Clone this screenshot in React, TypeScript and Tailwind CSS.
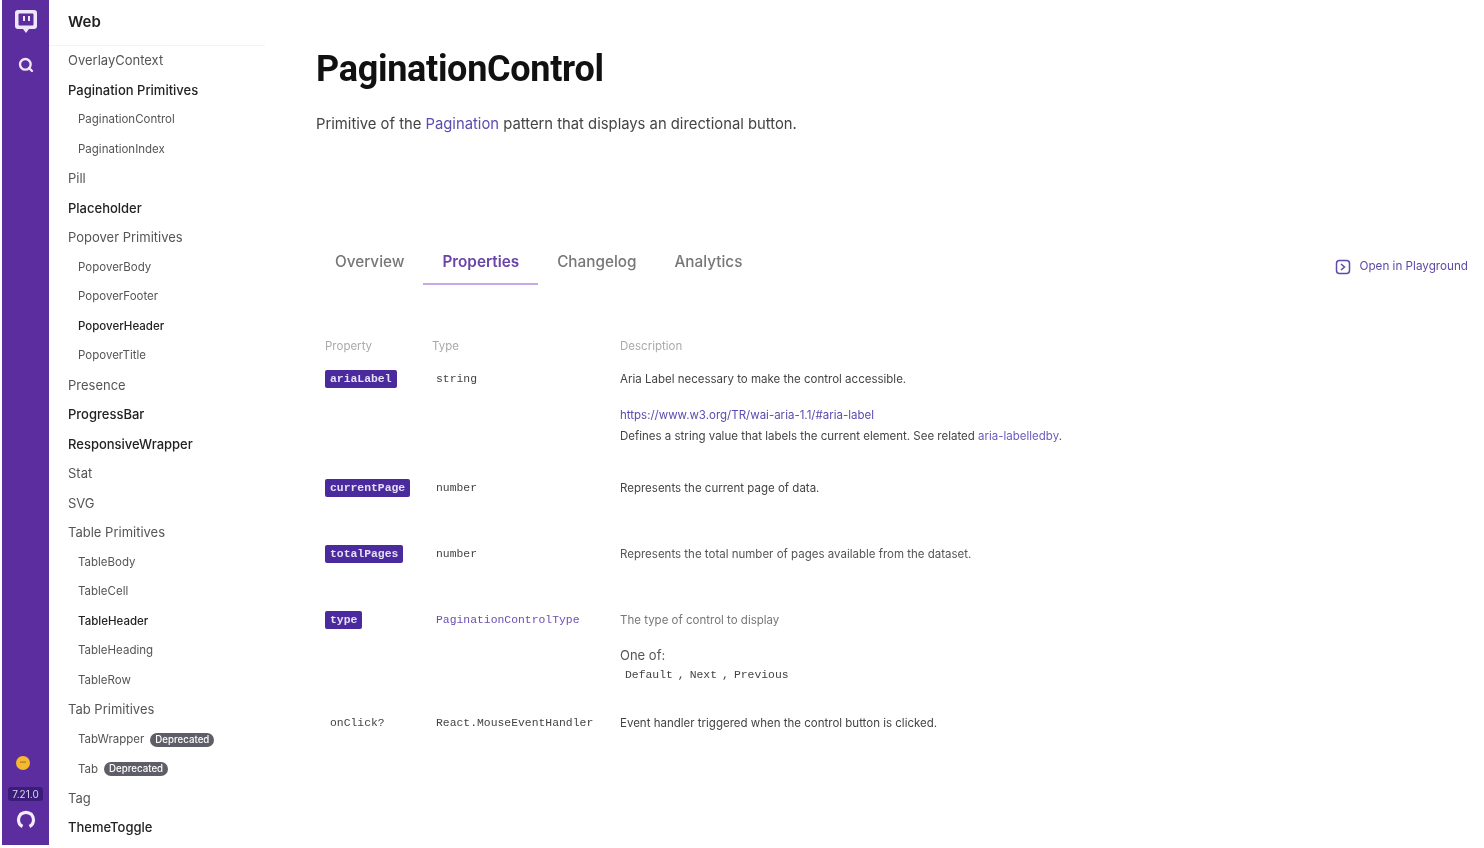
// Component docs page: purple rail, nav list, and the properties table.
import { Search } from "lucide-react";

type NavItem = { label: string; sub?: boolean; dark?: boolean; badge?: boolean };

const nav: NavItem[] = [
  { label: "OverlayContext" },
  { label: "Pagination Primitives", dark: true },
  { label: "PaginationControl", sub: true },
  { label: "PaginationIndex", sub: true },
  { label: "Pill" },
  { label: "Placeholder", dark: true },
  { label: "Popover Primitives" },
  { label: "PopoverBody", sub: true },
  { label: "PopoverFooter", sub: true },
  { label: "PopoverHeader", sub: true, dark: true },
  { label: "PopoverTitle", sub: true },
  { label: "Presence" },
  { label: "ProgressBar", dark: true },
  { label: "ResponsiveWrapper", dark: true },
  { label: "Stat" },
  { label: "SVG" },
  { label: "Table Primitives" },
  { label: "TableBody", sub: true },
  { label: "TableCell", sub: true },
  { label: "TableHeader", sub: true, dark: true },
  { label: "TableHeading", sub: true },
  { label: "TableRow", sub: true },
  { label: "Tab Primitives" },
  { label: "TabWrapper", sub: true, badge: true },
  { label: "Tab", sub: true, badge: true },
  { label: "Tag" },
  { label: "ThemeToggle", dark: true },
];

function TwitchLogo() {
  return (
    <svg viewBox="0 0 24 26" className="h-[26px] w-[24px]">
      <path
        d="M4 1h16a3 3 0 0 1 3 3v13a3 3 0 0 1-3 3h-5l-3 4-3-4H4a3 3 0 0 1-3-3V4a3 3 0 0 1 3-3z"
        fill="#efe6fa"
      />
      <rect x="4.500" y="4.500" width="15" height="12" rx="1" fill="#5c2d9f" />
      <rect x="9" y="7" width="2" height="5" fill="#efe6fa" />
      <rect x="14" y="7" width="2" height="5" fill="#efe6fa" />
    </svg>
  );
}

function GithubMark() {
  return (
    <svg viewBox="0 0 20 20" className="h-5 w-5" fill="none" stroke="#f3ecfb" strokeWidth="3.200">
      <path d="M6.500 17.500C3.800 16.200 2.500 13.500 2.500 10.800 2.500 6.600 5.800 3.300 10 3.300s7.500 3.300 7.500 7.500c0 2.700-1.300 5.400-4 6.700" />
      <path d="M4 4l1.500 2M16 4l-1.500 2" strokeWidth="2" />
    </svg>
  );
}

function Smiley() {
  return (
    <svg viewBox="0 0 14 14" className="ml-[14px] mt-auto h-[14px] w-[14px] self-start">
      <circle cx="7" cy="7" r="7" fill="#f5b82e" />
      <rect x="4" y="5.500" width="6" height="1.200" fill="#a8792a" />
    </svg>
  );
}

function Code({ children }: { children: string }) {
  return (
    <span className="inline-flex h-[18px] items-center rounded-[2px] bg-[#4b2a9e] px-[5px] font-['Liberation_Mono',monospace] text-[11.400px] font-bold text-[#e6e0f5]">
      {children}
    </span>
  );
}

function Mono({ children, purple }: { children: string; purple?: boolean }) {
  return (
    <span
      className={
        "font-['Liberation_Mono',monospace] text-[11.400px] leading-[18px] " +
        (purple ? "text-[#6b4fb0]" : "text-[#444]")
      }
    >
      {children}
    </span>
  );
}

const rowGrid = "grid grid-cols-[111px_184px_1fr] items-start";

export default function App() {
  return (
    <div className="flex h-[848px] w-[1484px] overflow-hidden bg-white pl-[2px] font-['Inter',sans-serif] blur-[0.6px]">
      <aside className="flex h-[845px] w-[47px] shrink-0 flex-col items-center bg-[#5c2d9f] pt-[9px]">
        <TwitchLogo />
        <Search className="mt-[22px] h-4 w-4 text-[#efe6fa]" strokeWidth={3.500} />
        <Smiley />
        <div className="mt-[17px] rounded-[3px] bg-[#3a1d78] px-[4px] text-[10px] leading-[14px] text-[#ddd6ee]">
          7.21.0
        </div>
        <div className="mb-[16px] mt-[8px] h-5">
          <GithubMark />
        </div>
      </aside>

      <nav className="w-[216px] shrink-0">
        <div className="flex h-[46px] items-center border-b border-[#f3f3f3] pl-[19px] text-[15px] font-semibold text-[#222]">
          Web
        </div>
        <ul>
          {nav.map((item) => (
            <li
              key={item.label}
              className={
                "flex h-[29.520px] items-center " +
                (item.sub ? "gap-[6px] pl-[29px] text-[11.500px] " : "pl-[19px] text-[13px] ") +
                (item.dark ? "font-medium text-[#222]" : "text-[#555]")
              }
            >
              {item.label}
              {item.badge && (
                <span className="rounded-full bg-[#5e5e68] px-[5px] text-[9.700px] font-medium leading-[14px] text-white">
                  Deprecated
                </span>
              )}
            </li>
          ))}
        </ul>
      </nav>

      <main className="min-w-0 flex-1 pl-[51px]">
        <h1 className="mt-[46px] font-['Roboto',sans-serif] text-[36px] font-bold leading-[46px] tracking-[-0.3px] text-[#111]">
          PaginationControl
        </h1>
        <p className="mt-[22px] text-[14.800px] leading-[20px] text-[#444]">
          Primitive of the <span className="text-[#5c4bb0]">Pagination</span> pattern that displays an directional button.
        </p>

        <div className="mt-[107px] flex items-start justify-between pr-[16px]">
          <div className="flex text-[15.300px] font-medium leading-[20px] text-[#777]">
            <span className="h-[44px] px-[19px] pt-[11px]">Overview</span>
            <span className="h-[44px] border-b-2 border-[#c9a8ea] px-[19px] pt-[11px] font-semibold text-[#6a45a8]">
              Properties
            </span>
            <span className="h-[44px] px-[19px] pt-[11px]">Changelog</span>
            <span className="h-[44px] px-[19px] pt-[11px]">Analytics</span>
          </div>
          <div className="mt-[17px] flex items-center gap-[8px] text-[11.700px] text-[#5f4aa8]">
            <svg viewBox="0 0 16 16" className="h-4 w-4" fill="none" stroke="#5f4aa8" strokeWidth="1.500">
              <rect x="1.500" y="1.500" width="13" height="13" rx="3" />
              <path d="M6 5l3.500 3L6 11" />
            </svg>
            Open in Playground
          </div>
        </div>

        <section className="mt-[53px] pl-[9px]">
          <div className={rowGrid + " text-[11.500px] text-[#aaa]"}>
            <span>Property</span>
            <span className="-ml-[4px]">Type</span>
            <span>Description</span>
          </div>

          <div className={rowGrid + " mt-[15px]"}>
            <div className="flex"><Code>ariaLabel</Code></div>
            <div className="flex"><Mono>string</Mono></div>
            <div className="text-[11.500px] text-[#444]">
              <div className="leading-[18px]">Aria Label necessary to make the control accessible.</div>
              <div className="mt-[18px] leading-[18px] text-[#5c4bb0]">https://www.w3.org/TR/wai-aria-1.1/#aria-label</div>
              <div className="mt-[3px] leading-[18px]">
                Defines a string value that labels the current element. See related{" "}
                <span className="text-[#6b5cc0]">aria-labelledby</span>.
              </div>
            </div>
          </div>

          <div className={rowGrid + " mt-[34px]"}>
            <div className="flex"><Code>currentPage</Code></div>
            <div className="flex"><Mono>number</Mono></div>
            <div className="text-[11.500px] leading-[18px] text-[#444]">Represents the current page of data.</div>
          </div>

          <div className={rowGrid + " mt-[48px]"}>
            <div className="flex"><Code>totalPages</Code></div>
            <div className="flex"><Mono>number</Mono></div>
            <div className="text-[11.500px] leading-[18px] text-[#555]">Represents the total number of pages available from the dataset.</div>
          </div>

          <div className={rowGrid + " mt-[48px]"}>
            <div className="flex"><Code>type</Code></div>
            <div className="flex"><Mono purple>PaginationControlType</Mono></div>
            <div className="text-[#555]">
              <div className="text-[11.500px] leading-[18px] text-[#777]">The type of control to display</div>
              <div className="mt-[17px] text-[13px] leading-[18px]">One of:</div>
              <div className="mt-[2px] flex gap-[5px] pl-[5px]">
                <Mono>Default</Mono>
                <Mono>,</Mono>
                <Mono>Next</Mono>
                <Mono>,</Mono>
                <Mono>Previous</Mono>
              </div>
            </div>
          </div>

          <div className={rowGrid + " mt-[30px]"}>
            <div className="flex pl-[5px]"><Mono>onClick?</Mono></div>
            <div className="flex"><Mono>React.MouseEventHandler</Mono></div>
            <div className="text-[11.500px] leading-[18px] text-[#444]">Event handler triggered when the control button is clicked.</div>
          </div>
        </section>
      </main>
    </div>
  );
}
